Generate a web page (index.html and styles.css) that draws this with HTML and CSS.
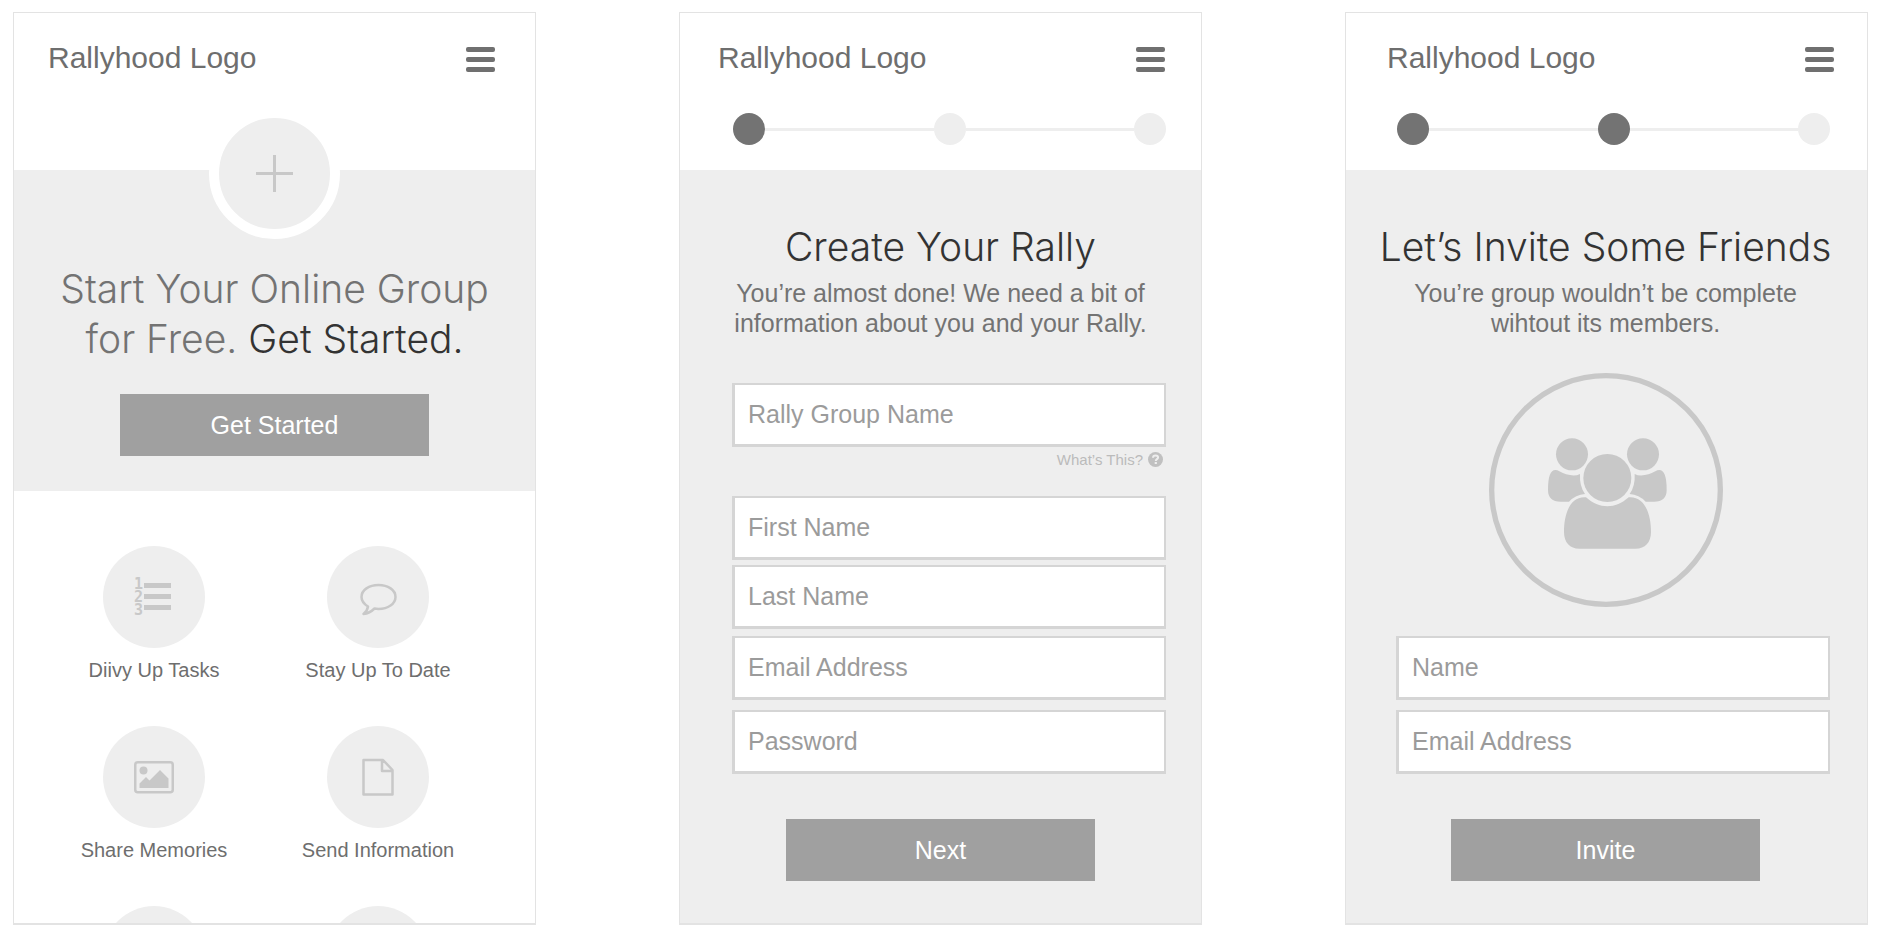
FILE: index.html
```html
<!DOCTYPE html>
<html lang="en">
<head>
    <meta charset="UTF-8">
    <meta name="viewport" content="width=device-width, initial-scale=1.0">
    <title>Rallyhood</title>
    <link rel="stylesheet" href="styles.css">
</head>
<body>
    <div class="screens">

        <!-- Home -->
        <section class="screen home">
            <header class="header">
                <div class="topbar">
                    <div class="logo">Rallyhood Logo</div>
                    <button type="button" class="menu" aria-label="Menu"><span></span><span></span><span></span></button>
                </div>
                <button type="button" class="add" aria-label="Add">
                    <svg width="37" height="37" viewBox="0 0 37 37"><path d="M18.500 0V37M0 18.500H37" stroke="#c8c8c8" stroke-width="3"/></svg>
                </button>
            </header>
            <div class="hero">
                <h1>Start Your Online Group<br>for Free. <strong>Get Started.</strong></h1>
                <button type="button" class="btn">Get Started</button>
            </div>
            <div class="features">
                <div class="feature">
                    <div class="circle">
                        <svg width="40" height="42" viewBox="0 -1 40 42" fill="#c8c8c8">
                            <text class="num" x="0" y="12">1</text>
                            <text class="num" x="0" y="25">2</text>
                            <text class="num" x="0" y="38">3</text>
                            <path d="M10 6h27v5H10zM10 17h27v5H10zM10 28h27v5H10z"/>
                        </svg>
                    </div>
                    <p>Diivy Up Tasks</p>
                </div>
                <div class="feature">
                    <div class="circle">
                        <svg width="38" height="38" viewBox="0 0 38 38" fill="none" stroke="#c8c8c8" stroke-width="2.500" stroke-linejoin="round">
                            <path d="M19.500 7C10 7 2.500 12 2.500 19c0 4 2.500 7 6.500 9.500C8.500 32 7 34 4.500 36c4.500-.5 8-2.500 11-5.500 1.300.3 2.600.4 4 .4 9.500 0 17-5.200 17-12S29 7 19.500 7z"/>
                        </svg>
                    </div>
                    <p>Stay Up To Date</p>
                </div>
                <div class="feature">
                    <div class="circle">
                        <svg width="40" height="34" viewBox="0 1 40 34">
                            <rect x="1.250" y="3.250" width="37.500" height="30" rx="2.500" fill="none" stroke="#c8c8c8" stroke-width="2.500"/>
                            <circle cx="9.500" cy="11.500" r="4" fill="#c8c8c8"/>
                            <path d="M5.500 29v-4.500l6.500-6.500 3.500 3.500L26 11l8.500 8.500V29z" fill="#c8c8c8"/>
                        </svg>
                    </div>
                    <p>Share Memories</p>
                </div>
                <div class="feature">
                    <div class="circle">
                        <svg width="32" height="38" viewBox="0 0 32 38" fill="none" stroke="#c8c8c8" stroke-width="2.500" stroke-linejoin="round">
                            <path d="M1.500 2H21l9.500 10v24.500H1.500zM20 2v11h10.500"/>
                        </svg>
                    </div>
                    <p>Send Information</p>
                </div>
                <div class="feature"><div class="circle"></div></div>
                <div class="feature"><div class="circle"></div></div>
            </div>
        </section>

        <!-- Step 1 -->
        <section class="screen create">
            <header class="header">
                <div class="topbar">
                    <div class="logo">Rallyhood Logo</div>
                    <button type="button" class="menu" aria-label="Menu"><span></span><span></span><span></span></button>
                </div>
                <div class="steps">
                    <span class="dot active"></span>
                    <span class="line"></span>
                    <span class="dot"></span>
                    <span class="line"></span>
                    <span class="dot"></span>
                </div>
            </header>
            <form class="panel">
                <h2>Create Your Rally</h2>
                <p class="intro">You’re almost done! We need a bit of<br>information about you and your Rally.</p>
                <div class="fields">
                    <input type="text" placeholder="Rally Group Name" aria-label="Rally Group Name">
                    <a href="#" class="help">What’s This?
                        <svg width="15" height="15" viewBox="0 0 15 15">
                            <circle cx="7.500" cy="7.500" r="7.500" fill="#c0c0c0"/>
                            <path d="M5 5.800C5 4.300 6 3.400 7.500 3.400s2.600.9 2.600 2.100c0 1.600-2.300 1.700-2.300 3.400" fill="none" stroke="#eee" stroke-width="2"/>
                            <path d="M6.700 10h2.200v2H6.700z" fill="#eee"/>
                        </svg>
                    </a>
                    <div class="group names">
                        <input type="text" placeholder="First Name" aria-label="First Name">
                        <input type="text" placeholder="Last Name" aria-label="Last Name">
                    </div>
                    <div class="group">
                        <input type="email" placeholder="Email Address" aria-label="Email Address">
                        <input type="password" placeholder="Password" aria-label="Password">
                    </div>
                </div>
                <button type="button" class="btn">Next</button>
            </form>
        </section>

        <!-- Step 2 -->
        <section class="screen invite">
            <header class="header">
                <div class="topbar">
                    <div class="logo">Rallyhood Logo</div>
                    <button type="button" class="menu" aria-label="Menu"><span></span><span></span><span></span></button>
                </div>
                <div class="steps">
                    <span class="dot active"></span>
                    <span class="line"></span>
                    <span class="dot active"></span>
                    <span class="line"></span>
                    <span class="dot"></span>
                </div>
            </header>
            <form class="panel">
                <h2>Let’s Invite Some Friends</h2>
                <p class="intro">You’re group wouldn’t be complete<br>wihtout its members.</p>
                <svg class="people" width="234" height="234" viewBox="27 26 702 702" fill="#c8c8c8">
                    <circle cx="378" cy="377" r="343" fill="none" stroke="#c8c8c8" stroke-width="16"/>
                    <circle cx="276" cy="270" r="48"/>
                    <circle cx="489" cy="270" r="48"/>
                    <path d="M232 318q44 24 68 11-2 36 15 60-28 2-48 23h-25q-38 0-38-36 0-66 28-58z"/>
                    <path d="M532 318q-44 24-68 11 2 36-15 60 28 2 48 23h25q38 0 38-36 0-66-28-58z"/>
                    <circle cx="382" cy="341" r="72"/>
                    <path d="M318 399c40 36 88 36 128 0 46-4 67 46 67 104 0 32-18 50-46 50H298c-28 0-46-18-46-50 0-58 20-108 66-104z"/>
                </svg>
                <div class="fields">
                    <div class="group">
                        <input type="text" placeholder="Name" aria-label="Name">
                        <input type="email" placeholder="Email Address" aria-label="Email Address">
                    </div>
                </div>
                <button type="button" class="btn">Invite</button>
            </form>
        </section>

    </div>
</body>
</html>
```
FILE: styles.css
```css
* {
    box-sizing: border-box;
}
body {
    margin: 0;
    padding: 12px 10px 12px 13px;
    background: #fff;
    color: #737373;
    font-family: "Liberation Sans", Arial, sans-serif;
}
h1, h2, p {
    margin: 0;
}
button {
    border: none;
    padding: 0;
    font-family: inherit;
    cursor: pointer;
}
.screens {
    display: grid;
    grid-template-columns: repeat(3, 1fr);
    gap: 143px;
}
.screen {
    display: flex;
    flex-direction: column;
    border: 1px solid #e3e3e3;
    border-bottom-width: 2px;
}

/* header */
.header {
    height: 157px;
    padding-top: 27px;
}
.topbar {
    display: flex;
    justify-content: space-between;
    align-items: center;
    padding: 0 36px 0 38px;
}
.home .topbar {
    padding: 0 40px 0 34px;
}
.invite .topbar {
    padding: 0 33px 0 41px;
}
.logo {
    font-size: 30px;
    line-height: 36px;
    color: #6e6e6e;
}
.menu {
    display: flex;
    flex-direction: column;
    gap: 5px;
    width: 29px;
    padding-top: 2px;
    background: none;
}
.menu span {
    height: 5px;
    border-radius: 2px;
    background: #707070;
}
.steps {
    display: flex;
    align-items: center;
    margin-top: 37px;
    padding: 0 35px 0 53px;
}
.invite .steps {
    padding: 0 37px 0 51px;
}
.dot {
    width: 32px;
    height: 32px;
    border-radius: 50%;
    background: #eee;
}
.dot.active {
    background: #737373;
}
.line {
    flex: 1;
    height: 3px;
    background: #eee;
}

/* home */
.add {
    display: flex;
    align-items: center;
    justify-content: center;
    position: relative;
    width: 131px;
    height: 131px;
    margin: 32px auto 0;
    border: 10px solid #fff;
    border-radius: 50%;
    background: #eee;
}
.hero {
    padding: 94px 0 35px;
    background: #eee;
    text-align: center;
}
h1, h2 {
    font-family: Inter, "Liberation Sans", sans-serif;
    font-size: 39px;
    font-weight: 300;
    line-height: 50px;
}
h1 strong, h2 {
    font-weight: 300;
    color: #333;
}
.btn {
    display: block;
    width: 309px;
    height: 62px;
    margin: 30px auto 0;
    background: #a0a0a0;
    color: #fff;
    font-size: 25px;
}
.features {
    flex: 1;
    display: grid;
    grid-template-columns: 1fr 1fr;
    grid-auto-rows: 180px;
    align-content: start;
    padding: 55px 45px 0 28px;
    /* the list runs on below the fold */
    contain: size;
    overflow: hidden;
}
.feature {
    text-align: center;
}
.circle {
    display: flex;
    align-items: center;
    justify-content: center;
    width: 102px;
    height: 102px;
    margin: 0 auto 10px;
    border-radius: 50%;
    background: #eee;
}
.feature p {
    font-size: 20px;
    line-height: 24px;
    color: #6e6e6e;
}
.num {
    font-family: "DejaVu Sans Mono", monospace;
    font-size: 15px;
    font-weight: bold;
}

/* forms */
.panel {
    flex: 1;
    padding: 52px 0 42px;
    background: #eee;
    text-align: center;
}
.invite .panel {
    padding-right: 2px;
}
.intro {
    margin-top: 6px;
    font-size: 25px;
    line-height: 30px;
}
.fields {
    display: flex;
    flex-direction: column;
    margin-top: 45px;
    padding: 0 35px 0 52px;
}
.invite .fields {
    padding-left: 50px;
}
.group {
    display: flex;
    flex-direction: column;
    gap: 10px;
}
.names {
    gap: 5px;
    margin-bottom: 7px;
}
input {
    width: 100%;
    height: 64px;
    padding: 0 13px;
    border: 2px solid #d5d5d5;
    border-width: 2px 2px 3px 3px;
    border-radius: 0;
    background: #fff;
    color: #737373;
    font-family: inherit;
    font-size: 25px;
}
input::placeholder {
    color: #9b9b9b;
    opacity: 1;
}
.help {
    display: flex;
    justify-content: flex-end;
    align-items: center;
    gap: 5px;
    height: 25px;
    margin-bottom: 24px;
    padding-right: 3px;
    color: #bbb;
    font-size: 15px;
    text-decoration: none;
}
.people {
    display: block;
    margin: 35px auto 0;
}
.people + .fields {
    margin-top: 29px;
}
.panel .btn {
    margin-top: 45px;
}

@media (max-width: 1400px) {
    .screens {
        grid-template-columns: minmax(0, 524px);
        justify-content: center;
        gap: 40px;
    }
    .features {
        contain: none;
    }
}
```
